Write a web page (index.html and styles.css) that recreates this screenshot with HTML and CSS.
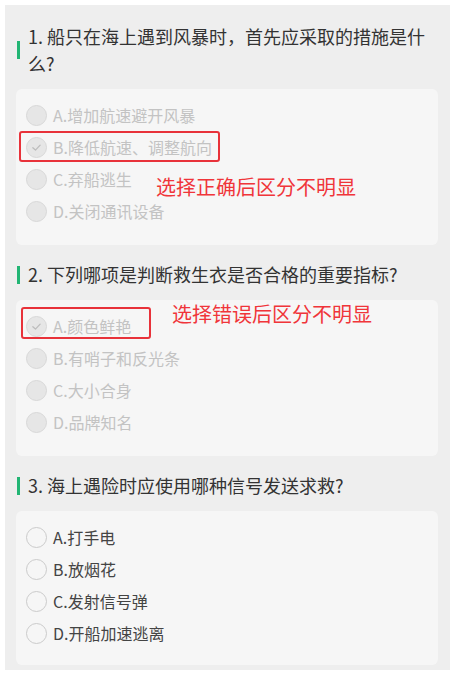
FILE: index.html
```html
<!DOCTYPE html>
<html lang="zh-CN">
  <head>
    <meta charset="UTF-8" />
    <meta name="viewport" content="width=device-width, initial-scale=1.0" />
    <title>安全知识答题</title>
    <link rel="stylesheet" href="styles.css">
  </head>
  <body>
    <div class="panel">
      <div class="question">
        <div class="q-title"><span class="bar"></span><span class="q-text">1. 船只在海上遇到风暴时，首先应采取的措施是什么?</span></div>
        <div class="card done">
          <div class="option"><span class="radio"></span><span class="label">A.增加航速避开风暴</span></div>
          <div class="option"><span class="radio checked"><svg viewBox="0 0 10 10"><polyline points="2.2,5.2 4.2,7 7.8,3.2" /></svg></span><span class="label">B.降低航速、调整航向</span></div>
          <div class="option"><span class="radio"></span><span class="label">C.弃船逃生</span></div>
          <div class="option"><span class="radio"></span><span class="label">D.关闭通讯设备</span></div>
          <div class="mark mark-1"></div>
          <div class="note note-1">选择正确后区分不明显</div>
        </div>
      </div>

      <div class="question">
        <div class="q-title"><span class="bar"></span><span class="q-text">2. 下列哪项是判断救生衣是否合格的重要指标?</span></div>
        <div class="card done">
          <div class="option"><span class="radio checked"><svg viewBox="0 0 10 10"><polyline points="2.2,5.2 4.2,7 7.8,3.2" /></svg></span><span class="label">A.颜色鲜艳</span></div>
          <div class="option"><span class="radio"></span><span class="label">B.有哨子和反光条</span></div>
          <div class="option"><span class="radio"></span><span class="label">C.大小合身</span></div>
          <div class="option"><span class="radio"></span><span class="label">D.品牌知名</span></div>
          <div class="mark mark-2"></div>
          <div class="note note-2">选择错误后区分不明显</div>
        </div>
      </div>

      <div class="question">
        <div class="q-title"><span class="bar"></span><span class="q-text">3. 海上遇险时应使用哪种信号发送求救?</span></div>
        <div class="card last">
          <div class="option"><span class="radio"></span><span class="label">A.打手电</span></div>
          <div class="option"><span class="radio"></span><span class="label">B.放烟花</span></div>
          <div class="option"><span class="radio"></span><span class="label">C.发射信号弹</span></div>
          <div class="option"><span class="radio"></span><span class="label">D.开船加速逃离</span></div>
        </div>
      </div>
    </div>
  </body>
</html>
```

FILE: styles.css
```css
body {
  margin: 0;
  background: #fff;
  font-family: "Noto Sans CJK SC", "Noto Sans", sans-serif;
}

.panel {
  width: 445px;
  margin: 5px 0 0 5px;
  padding: 2px 12px 5px 11px;
  box-sizing: border-box;
  background: #eeeeee;
}

.q-title {
  display: flex;
  align-items: center;
  padding: 16px 0 12px 1px;
  font-size: 18px;
  line-height: 27px;
  color: #333;
}

.bar {
  flex: none;
  width: 3px;
  height: 18px;
  margin-right: 8px;
  background: #22b574;
}

.q-text {
  flex: 1;
}

.card {
  position: relative;
  background: #f6f6f6;
  border-radius: 6px;
  padding: 10px 10px 18px;
}

.card.last {
  padding-bottom: 16px;
}

.option {
  display: flex;
  align-items: center;
  height: 32px;
  font-size: 16px;
  color: #444;
}

.radio {
  flex: none;
  width: 21px;
  height: 21px;
  margin-right: 6px;
  box-sizing: border-box;
  border: 1px solid #cbcbcb;
  border-radius: 50%;
  display: flex;
  align-items: center;
  justify-content: center;
}

.done .radio {
  background: #e6e6e6;
  border-color: #d8d8d8;
}

.done .label {
  color: #c3c3c3;
}

.radio svg {
  width: 13px;
  height: 13px;
}

.radio polyline {
  fill: none;
  stroke: #bdbdbd;
  stroke-width: 1;
  stroke-linecap: round;
  stroke-linejoin: round;
}

/* annotation boxes drawn over the screenshot */
.mark {
  position: absolute;
  border: 2px solid #e8323a;
  border-radius: 3px;
  box-sizing: border-box;
}

.mark-1 {
  left: 3px;
  top: 42px;
  width: 201px;
  height: 31px;
}

.mark-2 {
  left: 5px;
  top: 7px;
  width: 130px;
  height: 32px;
}

.note {
  position: absolute;
  font-size: 20px;
  line-height: 20px;
  color: #f0353a;
  white-space: nowrap;
}

.note-1 {
  left: 140px;
  top: 88px;
}

.note-2 {
  left: 156px;
  top: 4px;
}
```
